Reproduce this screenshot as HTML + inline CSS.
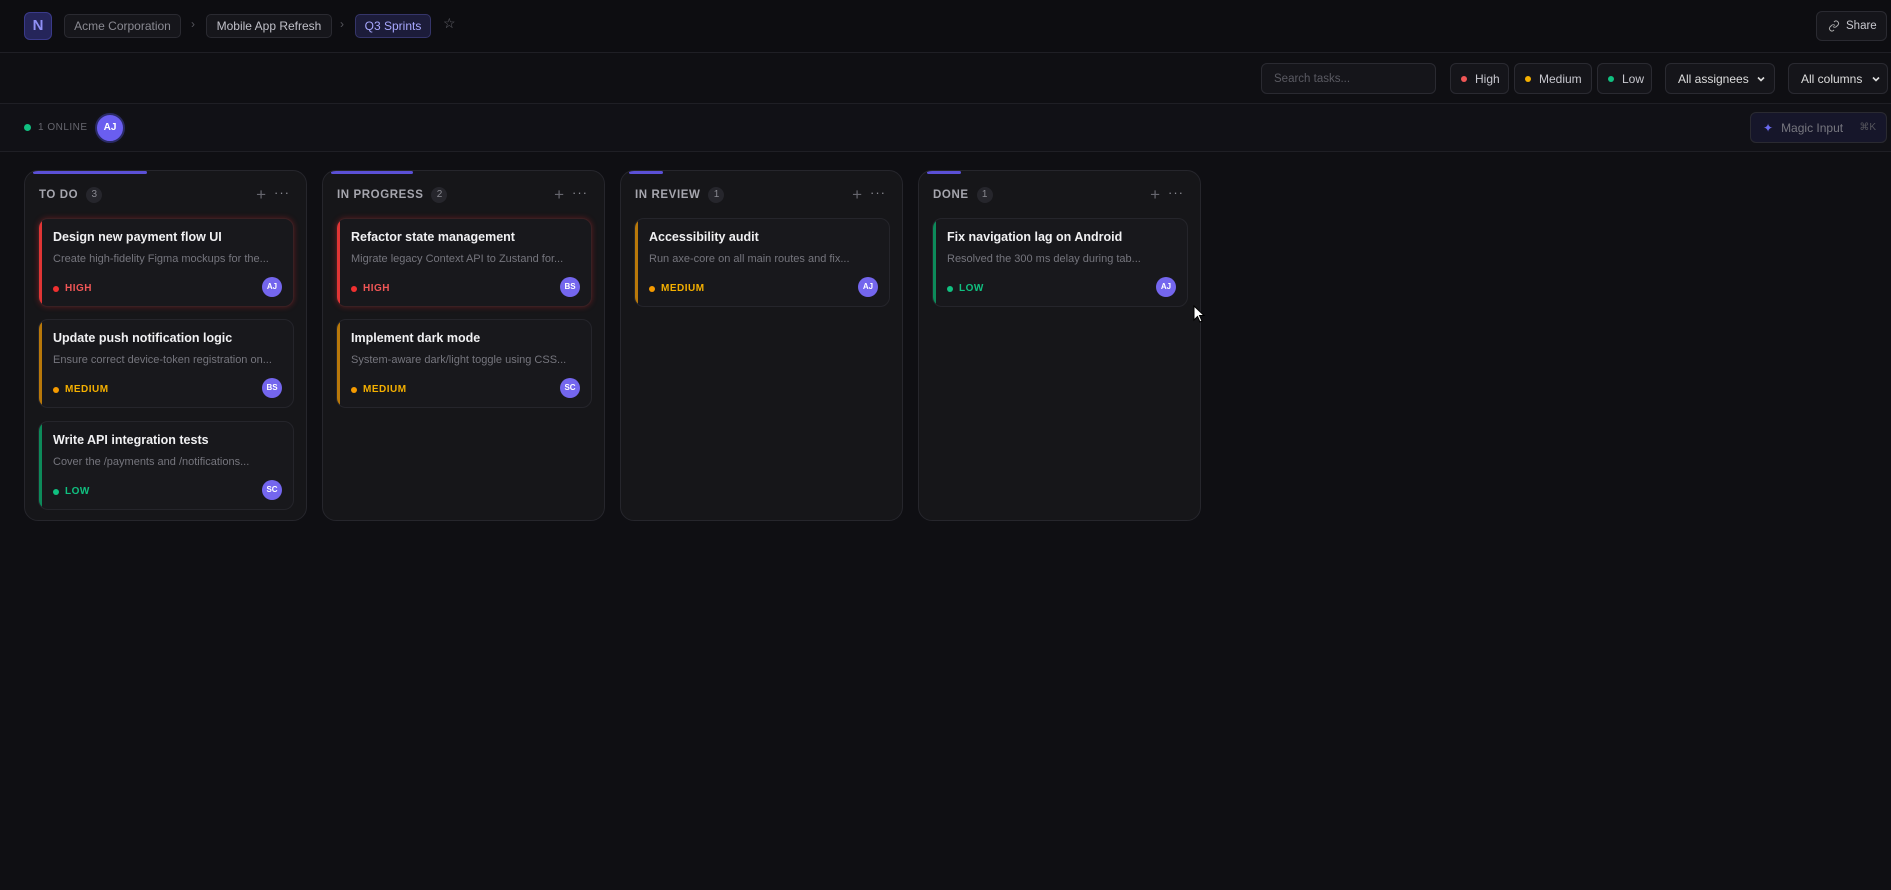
<!DOCTYPE html>
<html><head><meta charset="utf-8"><style>
*{box-sizing:border-box;margin:0;padding:0}
body{width:1891px;height:890px;background:#0f0f13;font-family:"Liberation Sans",sans-serif;color:#ddd;position:relative;overflow:hidden}
.abs{position:absolute}
.hb{top:0;left:0;width:1891px;height:53px;background:#0d0d11;border-bottom:1px solid #1f1f25}
.fr{top:53px;left:0;width:1891px;height:51px;background:#0f0f13;border-bottom:1px solid #1f1f25}
.or{top:104px;left:0;width:1891px;height:48px;background:#111116;border-bottom:1px solid #1f1f25}
.pill{position:absolute;height:24px;border:1px solid #2a2a31;border-radius:5px;background:#16161b;color:#9a9aa2;font-size:12px;line-height:22px;padding:0 8px;white-space:nowrap;text-align:center}
.btn{position:absolute;border:1px solid #2a2a31;border-radius:6px;background:#15151a;color:#c8c8cf;font-size:12px;display:flex;align-items:center;white-space:nowrap}
.dot{display:inline-block;width:6px;height:6px;border-radius:50%;margin-right:8px}
.col{position:absolute;top:170px;width:283px;height:351px;background:#161619;border:1px solid #26262c;border-radius:14px;overflow:hidden}
.acc{position:absolute;top:0;left:8px;height:3px;background:#5b50d6;border-radius:2px}
.ch{position:absolute;top:16px;left:14px;font-size:11.5px;font-weight:bold;letter-spacing:.6px;color:#a6a6ae;display:flex;align-items:center}
.cnt{display:inline-block;margin-left:8px;width:16px;height:16px;border-radius:8px;background:#26262c;color:#8a8a92;font-size:10px;text-align:center;line-height:16px;font-weight:normal;letter-spacing:0}
.plus{position:absolute;top:14px;right:40px;color:#66666e;font-size:17px}
.dots{position:absolute;top:14px;right:16px;color:#8a8a92;font-size:13px;letter-spacing:1px}
.card{position:absolute;left:13px;width:256px;height:89px;background:#18181c;border:1px solid #25252b;border-radius:10px;overflow:hidden}
.card::before{content:"";position:absolute;left:0;top:0;bottom:0;width:3px;background:var(--c)}
.card.hi{box-shadow:0 0 6px rgba(220,40,40,.35);border-color:#3a2023}
.t{position:absolute;left:14px;top:11px;font-size:12.5px;font-weight:bold;color:#f0f0f2;white-space:nowrap}
.d{position:absolute;left:14px;top:34px;font-size:11px;color:#75757d;white-space:nowrap}
.p{position:absolute;left:14px;top:64px;font-size:10px;font-weight:bold;letter-spacing:.5px;display:flex;align-items:center}
.p i{display:inline-block;width:6px;height:6px;border-radius:50%;margin-right:6px}
.av{position:absolute;right:11px;top:58px;width:20px;height:20px;border-radius:50%;background:#7466ee;color:#fff;font-size:8px;font-weight:bold;text-align:center;line-height:20px}
</style></head><body>
<div class="abs hb"></div>
<div class="abs" style="left:24px;top:12px;width:28px;height:28px;border:1px solid #3a3a8a;background:#25255a;border-radius:6px;color:#8f8ff5;font-weight:bold;font-size:15px;text-align:center;line-height:26px">N</div>
<div class="pill" style="left:64px;top:14px;width:117px;color:#8a8a92">Acme Corporation</div>
<div class="abs" style="left:191px;top:17px;color:#55555c;font-size:12px">›</div>
<div class="pill" style="left:206px;top:14px;width:126px;color:#c0c0c8">Mobile App Refresh</div>
<div class="abs" style="left:340px;top:17px;color:#55555c;font-size:12px">›</div>
<div class="pill" style="left:355px;top:14px;width:76px;background:#1c1c3a;border-color:#35356a;color:#a8a8ff">Q3 Sprints</div>
<div class="abs" style="left:443px;top:15px;color:#66666e;font-size:14px">☆</div>
<div class="btn" style="left:1816px;top:11px;width:71px;height:30px;padding-left:11px;font-size:11.5px"><svg width="12" height="12" viewBox="0 0 24 24" fill="none" stroke="#aaa" stroke-width="2" style="margin-right:6px"><path d="M10 13a5 5 0 0 0 7 0l3-3a5 5 0 0 0-7-7l-1 1"/><path d="M14 11a5 5 0 0 0-7 0l-3 3a5 5 0 0 0 7 7l1-1"/></svg>Share</div>

<div class="abs fr"></div>
<div class="btn" style="left:1261px;top:63px;width:175px;height:31px;padding-left:12px;color:#5a5a62;font-size:11.5px">Search tasks...</div>
<div class="btn" style="left:1450px;top:63px;width:59px;height:31px;padding-left:10px"><span class="dot" style="background:#f05656"></span>High</div>
<div class="btn" style="left:1514px;top:63px;width:78px;height:31px;padding-left:10px"><span class="dot" style="background:#f5b000"></span>Medium</div>
<div class="btn" style="left:1597px;top:63px;width:55px;height:31px;padding-left:10px"><span class="dot" style="background:#10c080"></span>Low</div>
<div class="btn" style="left:1665px;top:63px;width:110px;height:31px;padding-left:12px;color:#ddd">All assignees<svg style="position:absolute;right:8px" width="10" height="10" viewBox="0 0 10 10"><path d="M2 3.5 L5 6.5 L8 3.5" fill="none" stroke="#ddd" stroke-width="1.6"/></svg></div>
<div class="btn" style="left:1788px;top:63px;width:100px;height:31px;padding-left:12px;color:#ddd">All columns<svg style="position:absolute;right:6px" width="10" height="10" viewBox="0 0 10 10"><path d="M2 3.5 L5 6.5 L8 3.5" fill="none" stroke="#ddd" stroke-width="1.6"/></svg></div>

<div class="abs or"></div>
<div class="abs" style="left:24px;top:124px;width:7px;height:7px;border-radius:50%;background:#10c080"></div>
<div class="abs" style="left:38px;top:122px;font-size:10px;color:#66666e;letter-spacing:.5px">1 ONLINE</div>
<div class="abs" style="left:95px;top:113px;width:30px;height:30px;border-radius:50%;border:2px solid #2a2a66;background:#6a5ef0;box-shadow:0 0 0 2px #121218;color:#fff;font-size:10px;font-weight:bold;text-align:center;line-height:26px">AJ</div>
<div class="btn" style="left:1750px;top:112px;width:137px;height:31px;padding-left:12px;background:#16162a;color:#77777f;font-size:12px"><span style="color:#6a6af0;margin-right:8px">✦</span>Magic Input<span style="position:absolute;right:10px;font-size:10px;color:#55555c">⌘K</span></div>

<div class="col" style="left:24px"><div class="acc" style="width:114px"></div><div class="ch">TO DO<span class="cnt">3</span></div><div class="plus">+</div><div class="dots">···</div>
<div class="card hi" style="top:47px;--c:#e03535"><div class="t">Design new payment flow UI</div><div class="d">Create high-fidelity Figma mockups for the...</div><div class="p" style="color:#f05656"><i style="background:#f03030"></i>HIGH</div><div class="av">AJ</div></div>
<div class="card" style="top:148px;--c:#b8780a"><div class="t">Update push notification logic</div><div class="d">Ensure correct device-token registration on...</div><div class="p" style="color:#f5b000"><i style="background:#f59a00"></i>MEDIUM</div><div class="av">BS</div></div>
<div class="card" style="top:250px;--c:#0d8a5a"><div class="t">Write API integration tests</div><div class="d">Cover the /payments and /notifications...</div><div class="p" style="color:#10c080"><i style="background:#10c080"></i>LOW</div><div class="av">SC</div></div>
</div>
<div class="col" style="left:322px"><div class="acc" style="width:82px"></div><div class="ch">IN PROGRESS<span class="cnt">2</span></div><div class="plus">+</div><div class="dots">···</div>
<div class="card hi" style="top:47px;--c:#e03535"><div class="t">Refactor state management</div><div class="d">Migrate legacy Context API to Zustand for...</div><div class="p" style="color:#f05656"><i style="background:#f03030"></i>HIGH</div><div class="av">BS</div></div>
<div class="card" style="top:148px;--c:#b8780a"><div class="t">Implement dark mode</div><div class="d">System-aware dark/light toggle using CSS...</div><div class="p" style="color:#f5b000"><i style="background:#f59a00"></i>MEDIUM</div><div class="av">SC</div></div>
</div>
<div class="col" style="left:620px"><div class="acc" style="width:34px"></div><div class="ch">IN REVIEW<span class="cnt">1</span></div><div class="plus">+</div><div class="dots">···</div>
<div class="card" style="top:47px;--c:#b8780a"><div class="t">Accessibility audit</div><div class="d">Run axe-core on all main routes and fix...</div><div class="p" style="color:#f5b000"><i style="background:#f59a00"></i>MEDIUM</div><div class="av">AJ</div></div>
</div>
<div class="col" style="left:918px"><div class="acc" style="width:34px"></div><div class="ch">DONE<span class="cnt">1</span></div><div class="plus">+</div><div class="dots">···</div>
<div class="card" style="top:47px;--c:#0d8a5a"><div class="t">Fix navigation lag on Android</div><div class="d">Resolved the 300 ms delay during tab...</div><div class="p" style="color:#10c080"><i style="background:#10c080"></i>LOW</div><div class="av">AJ</div></div>
</div>
<svg class="abs" style="left:1193px;top:305px" width="12" height="18" viewBox="0 0 12 18"><path d="M1 1 L1 15 L4.5 11.5 L7 17 L9 16 L6.5 10.5 L11 10.5 Z" fill="#fff" stroke="#000" stroke-width="1"/></svg>
</body></html>
